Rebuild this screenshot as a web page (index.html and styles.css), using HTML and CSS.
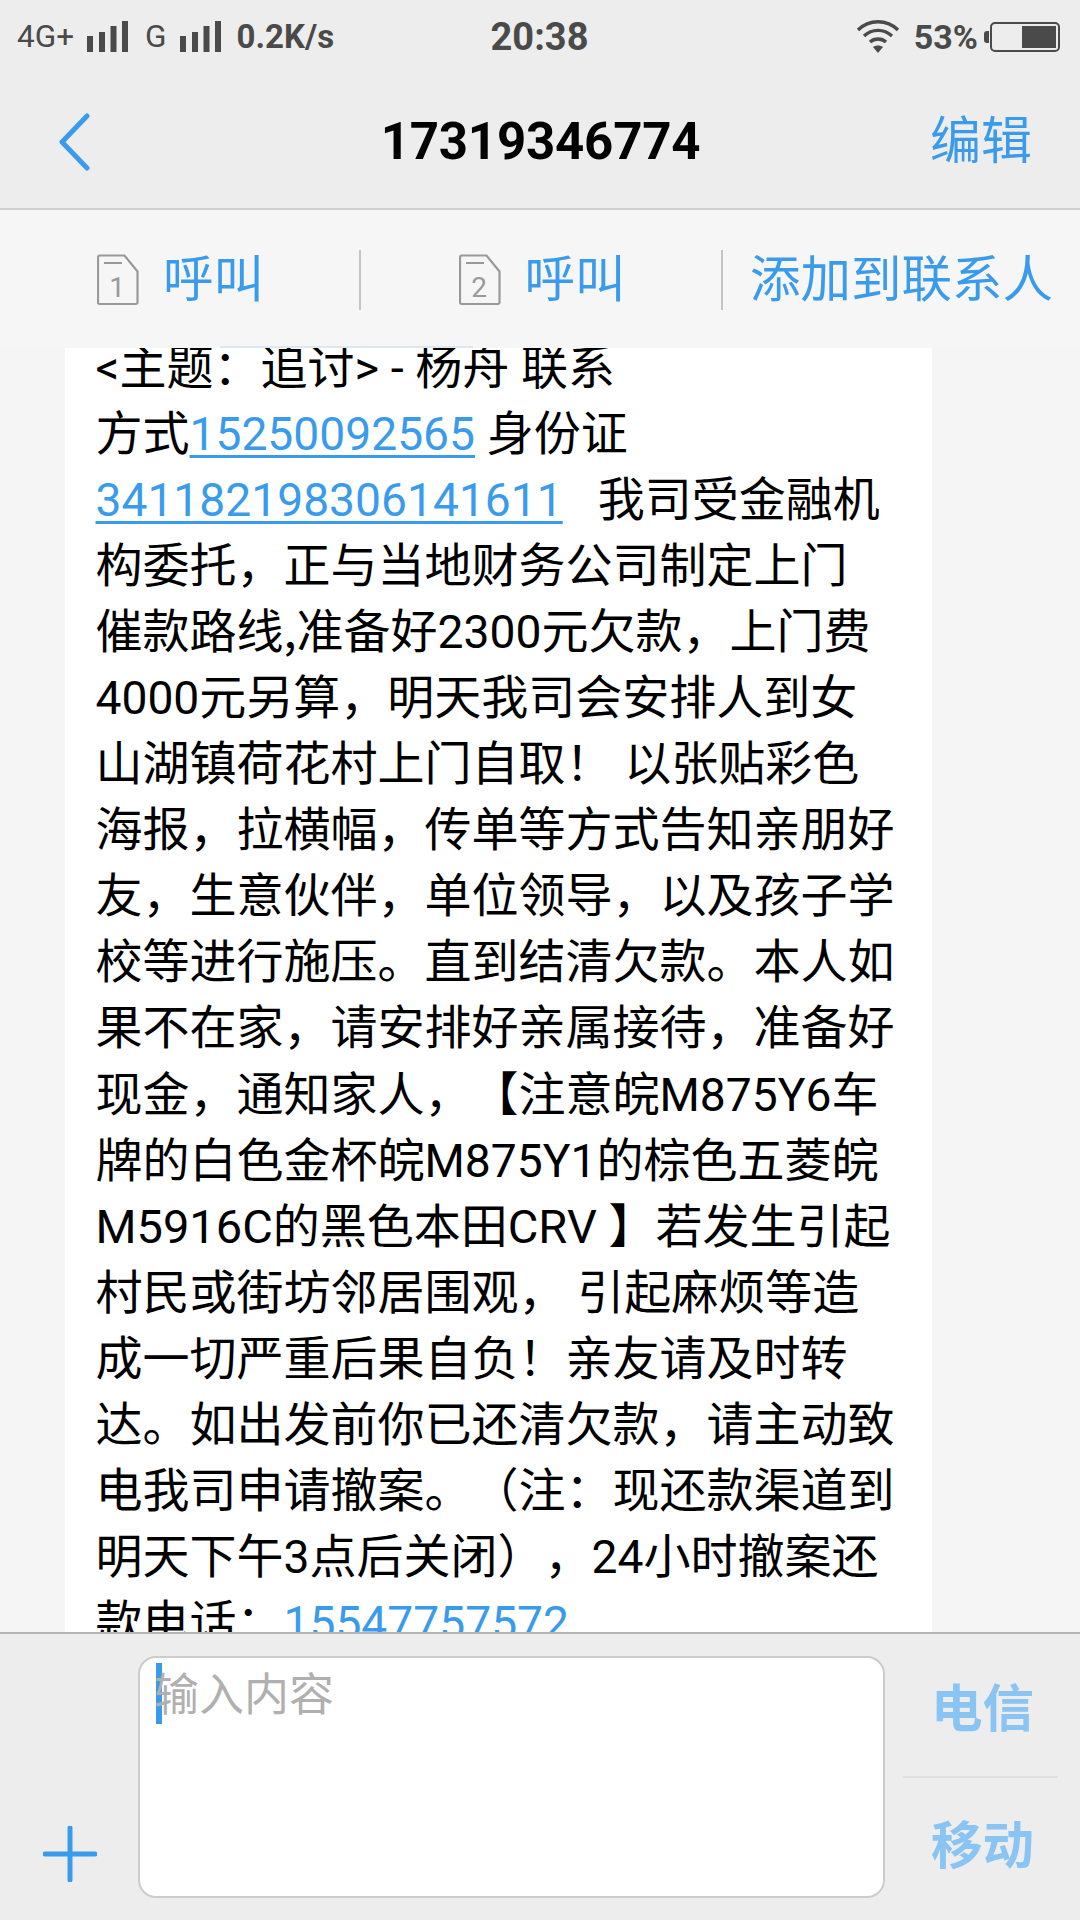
FILE: index.html
```html
<!DOCTYPE html>
<html lang="zh-CN">
<head>
<meta charset="utf-8">
<title>17319346774</title>
<link rel="stylesheet" href="styles.css">
</head>
<body>
<div class="phone">
  <header class="top">
    <div class="status">
      <div class="status-left">
        <span class="net">4G+</span>
        <svg class="signal" width="41" height="32" viewBox="0 0 41 32"><path d="M0 16h6v16H0zM12 12h6v20h-6zM23.500 6h6v26h-6zM35 1h6v31h-6z"/></svg>
        <span class="net net-g">G</span>
        <svg class="signal" width="41" height="32" viewBox="0 0 41 32"><path d="M0 16h6v16H0zM12 12h6v20h-6zM23.500 6h6v26h-6zM35 1h6v31h-6z"/></svg>
        <span class="speed">0.2K/s</span>
      </div>
      <div class="clock">20:38</div>
      <div class="status-right">
        <svg class="wifi" width="44" height="34" viewBox="0 0 44 34"><path d="M2 11C13 0 31 0 42 11M8 17c8-7.500 20-7.500 28 0M14 23c4.500-4 11.500-4 16 0" fill="none" stroke="#4a4a4a" stroke-width="3.400"/><path d="M17 28c3-2 7-2 10 0l-5 6z" fill="#4a4a4a"/></svg>
        <span class="pct">53%</span>
        <div class="battery-wrap">
          <span class="battery-nub"></span>
          <div class="battery"><span class="battery-fill"></span></div>
        </div>
      </div>
    </div>
    <div class="titlebar">
      <svg class="back" width="32" height="58" viewBox="0 0 32 58"><path d="M28 3L3 29l25 26" fill="none" stroke="#3a9bec" stroke-width="5" stroke-linecap="round" stroke-linejoin="round"/></svg>
      <h1 class="title">17319346774</h1>
      <span class="edit">编辑</span>
    </div>
  </header>

  <nav class="actions">
    <div class="action action-1">
      <svg class="sim" width="42" height="52" viewBox="0 0 42 52"><path d="M2.500 1.500h25l13 16v31a1.500 1.500 0 0 1-1.500 1.500H2.500A1.500 1.500 0 0 1 1 48.500v-45a2 2 0 0 1 1.500-2zM7 9h18" fill="none" stroke="#999" stroke-width="2.200"/><text x="20" y="43" class="sim-num">1</text></svg>
      <span>呼叫</span>
    </div>
    <div class="action action-2">
      <svg class="sim" width="42" height="52" viewBox="0 0 42 52"><path d="M2.500 1.500h25l13 16v31a1.500 1.500 0 0 1-1.500 1.500H2.500A1.500 1.500 0 0 1 1 48.500v-45a2 2 0 0 1 1.500-2zM7 9h18" fill="none" stroke="#999" stroke-width="2.200"/><text x="20" y="43" class="sim-num">2</text></svg>
      <span>呼叫</span>
    </div>
    <div class="action action-3"><span>添加到联系人</span></div>
    <span class="bleed"></span>
  </nav>

  <main class="thread">
    <article class="bubble">
      <span class="tail"></span>
      <p class="message">&lt;主题：追讨&gt; - 杨舟 联系
方式<a class="link">15250092565</a> 身份证
<a class="link">341182198306141611</a>   我司受金融机
构委托，正与当地财务公司制定上门
催款路线<span class="comma">,</span>准备好<span class="latin">2300</span>元欠款，上门费
<span class="latin">4000</span>元另算，明天我司会安排人到女
山湖镇荷花村上门自取！ 以张贴彩色
海报，拉横幅，传单等方式告知亲朋好
友，生意伙伴，单位领导，以及孩子学
校等进行施压。直到结清欠款。本人如
果不在家，请安排好亲属接待，准备好
现金，通知家人，【注意皖<span class="latin">M875Y6</span>车
牌的白色金杯皖<span class="latin">M875Y1</span>的棕色五菱皖
M5916C的黑色本田CRV 】若发生引起
村民或街坊邻居围观， 引起麻烦等造
成一切严重后果自负！亲友请及时转
达。如出发前你已还清欠款，请主动致
电我司申请撤案。（注：现还款渠道到
明天下午<span class="latin">3</span>点后关闭），<span class="latin">24</span>小时撤案还
款电话：<a class="link">15547757572</a></p>
    </article>
  </main>

  <footer class="composer">
    <svg class="plus" width="54" height="56" viewBox="0 0 54 56"><path d="M27 2v52M2 28h50" fill="none" stroke="#3a9bec" stroke-width="5" stroke-linecap="round"/></svg>
    <div class="input">
      <span class="caret"></span>
      <span class="placeholder">输入内容</span>
    </div>
    <div class="send">
      <span class="send-btn send-top">电信</span>
      <span class="send-btn send-bottom">移动</span>
    </div>
  </footer>
</div>
</body>
</html>
```
FILE: styles.css
```css
* { box-sizing: border-box; }
html, body { margin: 0; padding: 0; }
body {
  width: 1080px;
  height: 1920px;
  overflow: hidden;
  font-family: Roboto, "Noto Sans CJK SC", sans-serif;
  background: #f5f5f5;
  text-spacing-trim: space-all;
}
.phone { width: 1080px; height: 1920px; display: flex; flex-direction: column; }

.top { height: 210px; background: #ededed; border-bottom: 2px solid #cfcfcf; flex: none; }
.status {
  height: 74px;
  padding: 0 20px 0 17px;
  display: grid;
  grid-template-columns: 1fr auto 1fr;
  align-items: center;
  color: #4a4a4a;
}
.status-left, .status-right { display: flex; align-items: center; }
.status-right { justify-content: flex-end; }
.net { font-size: 31.500px; line-height: 34px; }
.net-g { margin: 0 0 0 17px; }
.signal { fill: #4a4a4a; margin-left: 13px; margin-bottom: 2px; }
.speed { font-size: 33px; font-weight: 700; line-height: 34px; margin-left: 16px; }
.clock { font-size: 38px; font-weight: 700; line-height: 40px; margin-left: 2px; }
.wifi { margin-right: 14px; margin-bottom: 2px; }
.pct { font-size: 34px; font-weight: 700; line-height: 34px; }
.battery-wrap { display: flex; align-items: center; margin-left: 6px; }
.battery-nub { width: 5px; height: 12px; background: #4a4a4a; border-radius: 3px 0 0 3px; margin-right: 1px; }
.battery {
  width: 70px; height: 30px;
  border: 2px solid #4a4a4a; border-radius: 5px;
  padding: 2px;
  display: flex; justify-content: flex-end;
}
.battery-fill { width: 34px; background: #4a4a4a; }

.titlebar {
  height: 134px;
  display: grid;
  grid-template-columns: 1fr auto 1fr;
  align-items: center;
  padding: 2px 48px 0 59px;
}
.back { flex: none; }
.title {
  margin: -2px 0 0 -10px;
  font-size: 51px;
  font-weight: 700;
  letter-spacing: -0.2px;
  color: #000;
}
.edit { font-size: 51px; line-height: 60px; color: #3a9bec; justify-self: end; }

.actions {
  height: 138px;
  flex: none;
  display: flex;
  align-items: center;
  padding-top: 1px;
  background: #f6f6f6;
  color: #3a9bec;
  font-size: 50.500px;
  line-height: 60px;
  position: relative;
}
.action {
  height: 60px;
  display: flex;
  align-items: center;
  justify-content: center;
  gap: 24px;
  padding-left: 2px;
  border-right: 2px solid #c4c4c4;
}
.action-1 { width: 361px; }
.action-2 { width: 362px; }
.action-3 { flex: 1; border-right: 0; padding-left: 0; }
.sim { flex: none; }
.sim-num { font-size: 28px; fill: #999; text-anchor: middle; font-family: Roboto, sans-serif; }
.bleed { position: absolute; left: 220px; bottom: 0; width: 253px; height: 2px; background: #dbe8f2; }

.thread { flex: 1; min-height: 0; overflow: hidden; padding-left: 65px; }
.bubble { width: 867px; height: 1400px; background: #fff; position: relative; padding: 0 0 0 30.500px; }
.tail {
  position: absolute;
  left: -17px;
  top: 0;
  width: 0; height: 0;
  border-top: 10px solid #fff;
  border-left: 17px solid transparent;
}
.message {
  margin: -13px 0 0;
  font-size: 47px;
  line-height: 66.050px;
  color: #000;
  white-space: pre;
}
.link { font-size: 46.200px; line-height: 1; color: #3a9bec; text-decoration: underline; text-decoration-thickness: 3px; text-underline-offset: 5px; }
.latin { font-size: 46.200px; line-height: 1; }
.comma { font-family: "Noto Sans CJK SC", sans-serif; line-height: 1; }

.composer {
  height: 288px;
  flex: none;
  background: #ededed;
  border-top: 2px solid #b5b5b5;
  display: flex;
  padding: 22px 34px 20px 43px;
}
.plus { flex: none; align-self: flex-end; margin-bottom: 18px; }
.input {
  width: 747px;
  height: 242px;
  margin-left: 41px;
  background: #fff;
  border: 2px solid #ccc;
  border-radius: 18px;
  padding: 5px 0 0 16px;
  display: flex;
  align-items: flex-start;
  flex: none;
}
.caret { width: 6px; height: 61px; background: #3a9bec; flex: none; }
.placeholder { font-size: 45px; line-height: 52px; color: #b0b0b0; margin: 7px 0 0 -8px; }
.send { width: 155px; margin-left: 18px; flex: none; display: flex; flex-direction: column; }
.send-btn {
  font-size: 51.500px;
  font-weight: 700;
  color: #8ac4f3;
  display: flex;
  align-items: center;
  justify-content: center;
}
.send-top { height: 124px; padding: 0 0 22px 4px; border-bottom: 2px solid #e0e0e0; margin-top: -1px; }
.send-bottom { height: 119px; padding-left: 4px; margin-top: 5px; }
```
